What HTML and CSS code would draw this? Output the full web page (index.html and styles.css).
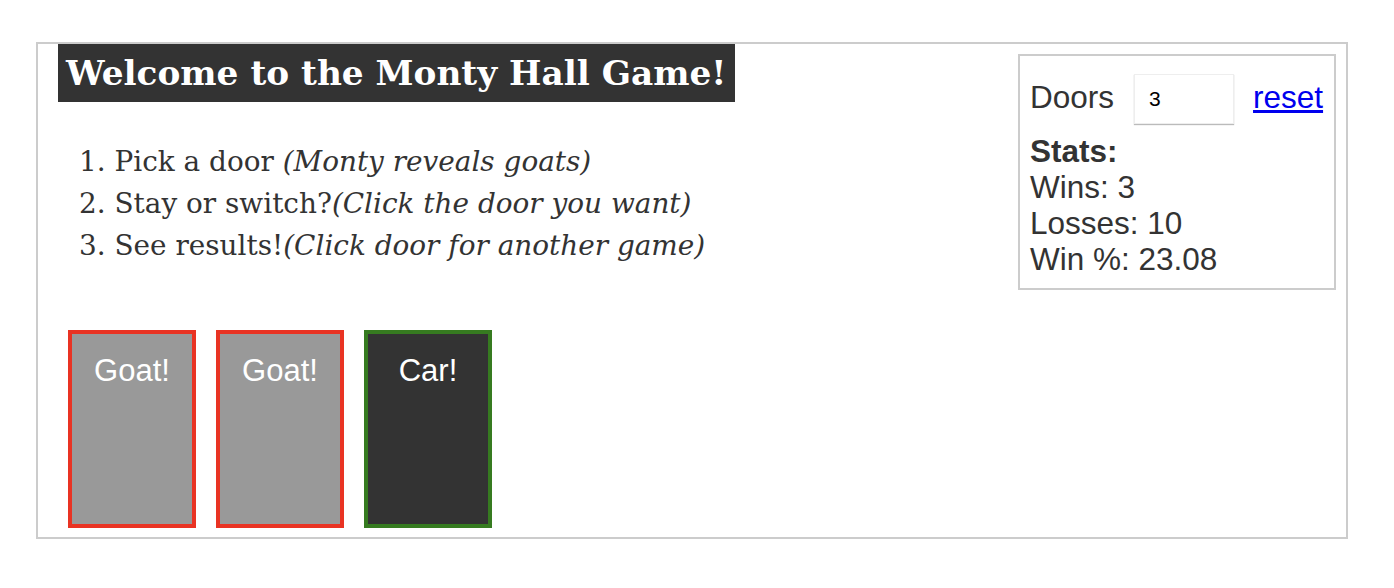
FILE: index.html
```html
<!DOCTYPE html>
<html>
<head>
<meta charset="utf-8">
<title>Monty Hall Game</title>
<link rel="stylesheet" href="styles.css">
</head>
<body>
<div class="game">
  <div class="top">
    <div class="intro">
      <h1 class="title">Welcome to the Monty Hall Game!</h1>
      <ol class="steps">
        <li>Pick a door <em>(Monty reveals goats)</em></li>
        <li>Stay or switch?<em>(Click the door you want)</em></li>
        <li>See results!<em>(Click door for another game)</em></li>
      </ol>
    </div>
    <div class="stats">
      <div class="doors-row">
        <span class="doors-label">Doors</span>
        <input class="doors-input" type="text" value="3">
        <a class="reset" href="#">reset</a>
      </div>
      <div class="stats-list">
        <div class="stats-head">Stats:</div>
        <div>Wins: 3</div>
        <div>Losses: 10</div>
        <div>Win %: 23.08</div>
      </div>
    </div>
  </div>
  <div class="doors">
    <div class="door goat">Goat!</div>
    <div class="door goat">Goat!</div>
    <div class="door car">Car!</div>
  </div>
</div>
</body>
</html>
```
FILE: styles.css
```css
html, body {
  margin: 0;
  padding: 0;
  background: #fff;
}

body {
  padding: 42px 46px 0 36px;
}

.game {
  border: 2px solid #ccc;
  padding: 0 10px 9px 20px;
  color: #333;
}

.top {
  display: flex;
  justify-content: space-between;
  align-items: flex-start;
}

.title {
  display: inline-block;
  margin: 0;
  background: #333;
  color: #fff;
  font-family: "DejaVu Serif", Georgia, serif;
  font-weight: bold;
  font-size: 34.3px;
  line-height: 58px;
  height: 58px;
  padding: 0 9px 0 8px;
  white-space: nowrap;
}

.steps {
  margin: 39px 0 0 21px;
  padding: 0;
  list-style: decimal inside;
  font-family: "DejaVu Serif", Georgia, serif;
  font-size: 27.9px;
  line-height: 42px;
  color: #333;
}

.steps em {
  font-style: italic;
}

.stats {
  margin-top: 10px;
  width: 318px;
  box-sizing: border-box;
  border: 2px solid #ccc;
  padding: 10px 10px 11px 10px;
  font-family: "Liberation Sans", Arial, sans-serif;
  font-size: 31.5px;
  color: #333;
}

.doors-row {
  display: flex;
  align-items: center;
  margin-top: 8px;
  height: 50px;
}

.doors-label {
  margin: 0 20px 4px 0;
}

.doors-input {
  width: 100px;
  height: 50px;
  box-sizing: border-box;
  border: 1px solid #eee;
  box-shadow: 0 1px 1px #bbb;
  padding: 0 0 0 14px;
  margin: 0 19px 0 0;
  font-family: "Liberation Sans", Arial, sans-serif;
  font-size: 21px;
  color: #000;
  outline: none;
}

.reset {
  color: #00e;
  text-decoration: underline;
  margin-bottom: 4px;
}

.stats-list {
  margin-top: 9px;
  line-height: 36px;
}

.stats-head {
  font-weight: bold;
}

.doors {
  display: flex;
  gap: 20px;
  margin: 40px 0 0 10px;
}

.door {
  width: 128px;
  height: 198px;
  box-sizing: border-box;
  border: 4px solid;
  color: #fff;
  font-family: "Liberation Sans", Arial, sans-serif;
  font-size: 31px;
  text-align: center;
  padding-top: 19px;
  line-height: 36px;
}

.goat {
  background: #999;
  border-color: #e93323;
}

.car {
  background: #333;
  border-color: #367b20;
}
```
